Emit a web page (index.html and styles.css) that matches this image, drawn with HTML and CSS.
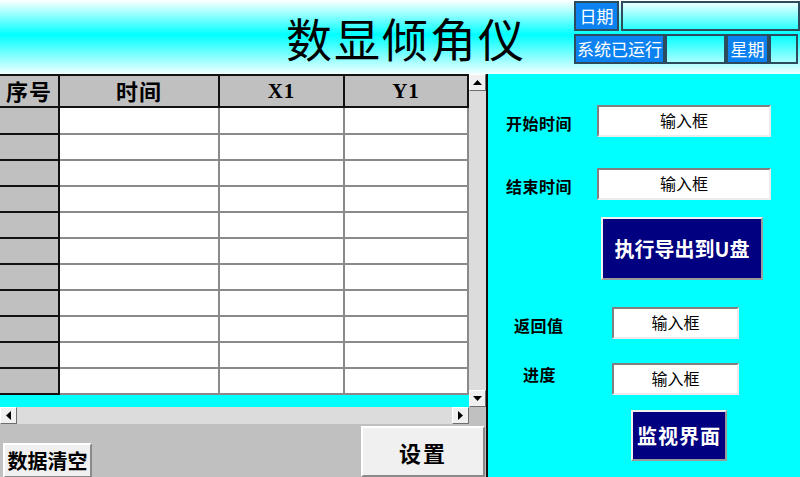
FILE: index.html
```html
<!DOCTYPE html>
<html lang="zh">
<head>
<meta charset="utf-8">
<title>数显倾角仪</title>
<link rel="stylesheet" href="styles.css">
</head>
<body>
<div class="screen">
  <header class="top">
    <h1 class="title">数显倾角仪</h1>
    <div class="info">
      <div class="info-row">
        <div class="tag w-date">日期</div>
        <div class="field w-datev"></div>
      </div>
      <div class="info-row">
        <div class="tag w-run">系统已运行</div>
        <div class="field w-runv"></div>
        <div class="tag w-week">星期</div>
        <div class="field w-weekv"></div>
      </div>
    </div>
  </header>
  <main class="main">
    <section class="left">
      <div class="table-area">
        <div class="table-col">
          <div class="grid">
            <div class="hcell">序号</div>
            <div class="hcell">时间</div>
            <div class="hcell latin">X1</div>
            <div class="hcell latin">Y1</div>
            <div class="idx"></div><div class="cell"></div><div class="cell"></div><div class="cell"></div>
            <div class="idx"></div><div class="cell"></div><div class="cell"></div><div class="cell"></div>
            <div class="idx"></div><div class="cell"></div><div class="cell"></div><div class="cell"></div>
            <div class="idx"></div><div class="cell"></div><div class="cell"></div><div class="cell"></div>
            <div class="idx"></div><div class="cell"></div><div class="cell"></div><div class="cell"></div>
            <div class="idx"></div><div class="cell"></div><div class="cell"></div><div class="cell"></div>
            <div class="idx"></div><div class="cell"></div><div class="cell"></div><div class="cell"></div>
            <div class="idx"></div><div class="cell"></div><div class="cell"></div><div class="cell"></div>
            <div class="idx"></div><div class="cell"></div><div class="cell"></div><div class="cell"></div>
            <div class="idx"></div><div class="cell"></div><div class="cell"></div><div class="cell"></div>
            <div class="idx"></div><div class="cell"></div><div class="cell"></div><div class="cell"></div>
          </div>
          <div class="strip"></div>
        </div>
        <div class="vscroll">
          <div class="sbtn"><svg width="9" height="5" viewBox="0 0 9 5"><polygon points="0,5 9,5 4.5,0" fill="#000"/></svg></div>
          <div class="vtrack"></div>
          <div class="sbtn"><svg width="9" height="5" viewBox="0 0 9 5"><polygon points="0,0 9,0 4.5,5" fill="#000"/></svg></div>
        </div>
      </div>
      <div class="hscroll-row">
        <div class="hscroll">
          <div class="sbtn"><svg width="5" height="9" viewBox="0 0 5 9"><polygon points="5,0 5,9 0,4.5" fill="#000"/></svg></div>
          <div class="htrack"></div>
          <div class="sbtn"><svg width="5" height="9" viewBox="0 0 5 9"><polygon points="0,0 0,9 5,4.5" fill="#000"/></svg></div>
        </div>
        <div class="corner"></div>
      </div>
      <div class="actions">
        <button class="gbtn btn-clear">数据清空</button>
        <button class="gbtn btn-set">设置</button>
      </div>
    </section>
    <section class="right">
      <div class="frow r1">
        <span class="lbl lbl-a">开始时间</span>
        <div class="input in-wide">输入框</div>
      </div>
      <div class="frow r2">
        <span class="lbl lbl-a">结束时间</span>
        <div class="input in-wide">输入框</div>
      </div>
      <button class="nbtn btn-export">执行导出到U盘</button>
      <div class="frow r3">
        <span class="lbl lbl-b">返回值</span>
        <div class="input in-narrow">输入框</div>
      </div>
      <div class="frow r4">
        <span class="lbl lbl-c">进度</span>
        <div class="input in-narrow">输入框</div>
      </div>
      <button class="nbtn btn-monitor">监视界面</button>
    </section>
  </main>
</div>
</body>
</html>
```
FILE: styles.css
```css
* { box-sizing: border-box; }
html, body { margin: 0; padding: 0; }
body {
  width: 800px;
  height: 477px;
  overflow: hidden;
  font-family: "Noto Sans CJK SC", "Noto Sans", sans-serif;
  background: #00ffff;
}
.screen { width: 800px; height: 477px; display: flex; flex-direction: column; }

/* header */
.top {
  height: 74px;
  display: flex;
  background: linear-gradient(to bottom, #ffffff 0%, #00ffff 47%, #f2ffff 100%);
}
.title {
  margin: 0 0 0 286px;
  font-size: 46px;
  font-weight: 400;
  letter-spacing: 2px;
  line-height: 74px;
  color: #000;
}
.info {
  margin-left: auto;
  padding-top: 1px;
  width: 226px;
  display: flex;
  flex-direction: column;
  gap: 3px;
}
.info-row { display: flex; height: 30px; }
.tag, .field {
  height: 30px;
  border: 2px solid #2c4b5c;
}
.tag {
  background: #0b82f0;
  color: #fff;
  font-size: 17px;
  line-height: 26px;
  text-align: center;
  white-space: nowrap;
}
.w-date { width: 45px; margin-right: 2px; }
.w-datev { width: 179px; }
.w-run { width: 91px; }
.w-runv { width: 61px; }
.w-week { width: 43px; }
.w-weekv { width: 29px; }

/* main */
.main { flex: 1; display: flex; }
.left { width: 486px; display: flex; flex-direction: column; }
.table-area { display: flex; height: 333px; }
.table-col { width: 469px; display: flex; flex-direction: column; }
.grid {
  display: grid;
  grid-template-columns: 60px 160px 125px 124px;
  grid-template-rows: 34px 27px repeat(10, 26px);
  background: #fff;
}
.hcell {
  background: #c0c0c0;
  border-top: 2px solid #111;
  border-right: 2px solid #111;
  border-bottom: 2px solid #111;
  font-size: 22px;
  font-weight: 700;
  text-align: center;
  line-height: 29px;
  color: #000;
  letter-spacing: 1px;
}
.hcell.latin {
  font-family: "Liberation Serif", serif;
  font-size: 21px;
  line-height: 30px;
}
.idx {
  background: #c0c0c0;
  border-right: 2px solid #111;
  border-bottom: 2px solid #111;
}
.cell {
  background: #fff;
  border-right: 2px solid #8a8a8a;
  border-bottom: 2px solid #8a8a8a;
}
.strip { flex: 1; background: #00ffff; }

.vscroll {
  width: 17px;
  background: #dcdcdc;
  display: flex;
  flex-direction: column;
}
.vtrack, .htrack { flex: 1; }
.sbtn {
  width: 17px;
  height: 17px;
  background: #f0f0f0;
  border: 1px solid;
  border-color: #ffffff #6e6e6e #6e6e6e #ffffff;
  display: flex;
  align-items: center;
  justify-content: center;
}
.hscroll-row { display: flex; height: 17px; }
.hscroll { width: 469px; display: flex; background: #dcdcdc; }
.corner { flex: 1; background: #c0c0c0; }

.actions {
  flex: 1;
  background: #c0c0c0;
  display: flex;
  align-items: flex-end;
  overflow: hidden;
}
.gbtn {
  padding: 0;
  margin: 0;
  background: #f0f0f0;
  border: 2px solid;
  border-color: #ffffff #8a8a8a #8a8a8a #ffffff;
  color: #000;
  font-family: "Noto Sans CJK SC", sans-serif;
  font-weight: 700;
}
.btn-clear {
  width: 89px;
  height: 35px;
  margin-left: 3px;
  margin-bottom: -1px;
  font-size: 20px;
}
.btn-set {
  width: 124px;
  height: 51px;
  margin-left: auto;
  margin-right: 1px;
  font-size: 22px;
  letter-spacing: 2px;
}

/* right panel */
.right {
  flex: 1;
  background: #00ffff;
  border-left: 2px solid #111;
  display: flex;
  flex-direction: column;
  align-items: flex-start;
}
.frow { display: flex; align-items: center; }
.r1 { margin-top: 31px; padding-left: 18px; }
.r2 { margin-top: 31px; padding-left: 18px; }
.r3 { margin-top: 27px; padding-left: 26px; }
.r4 { margin-top: 23px; padding-left: 35px; }
.lbl {
  font-size: 16px;
  font-weight: 700;
  color: #000;
  letter-spacing: 0.5px;
}
.lbl-a { width: 91px; padding-top: 4px; }
.lbl-b { width: 98px; padding-top: 4px; }
.lbl-c { width: 89px; padding-bottom: 10px; }
.input {
  height: 32px;
  background: #fff;
  border: 2px solid;
  border-color: #808080 #ececec #ececec #808080;
  font-size: 16px;
  line-height: 27px;
  text-align: center;
  color: #000;
}
.in-wide { width: 174px; }
.in-narrow { width: 127px; }
.nbtn {
  padding: 0;
  background: #000080;
  color: #fff;
  border: 2px solid;
  border-color: #f0f0f0 #9a9a9a #9a9a9a #f0f0f0;
  font-family: "Noto Sans CJK SC", sans-serif;
  font-weight: 700;
  font-size: 20px;
}
.btn-export {
  margin-top: 17px;
  margin-left: 113px;
  width: 162px;
  height: 63px;
}
.btn-monitor {
  margin-top: 14px;
  margin-left: 143px;
  width: 96px;
  height: 51px;
  letter-spacing: 1px;
}
```
